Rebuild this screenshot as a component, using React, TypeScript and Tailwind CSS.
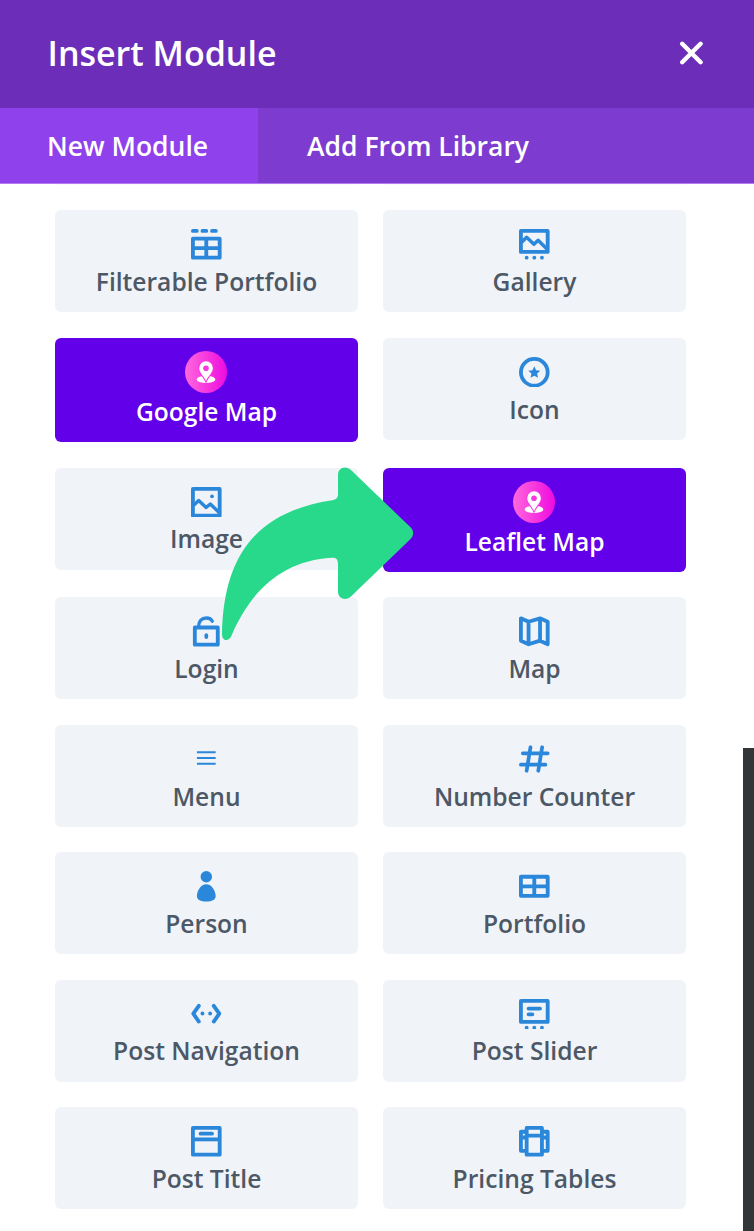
import type { ReactNode } from "react"

interface Module {
  name: string
  icon?: ReactNode
  featured?: boolean
}

const FONT = "font-['Open_Sans','Noto_Sans',sans-serif]"

const modules: Module[] = [
  {
    name: "Filterable Portfolio",
    icon: (
      <>
        <path d="M1 1h2M6 1h2M11 1h2" strokeLinecap="round" />
        <rect x="1" y="5" width="14" height="10" />
        <path d="M8 5v10M1 10h14" />
      </>
    ),
  },
  {
    name: "Gallery",
    icon: (
      <>
        <rect x="1" y="1" width="14" height="11" />
        <path d="M1.4 6.9L4 4.3 7.8 8 10 5.9l4.6 4.6" strokeWidth="1.8" />
        <Dots y={15} />
      </>
    ),
  },
  { name: "Google Map", featured: true },
  {
    name: "Icon",
    icon: (
      <>
        <circle cx="8" cy="8" r="7" />
        <path
          d="M8 4.8l.95 2.1 2.2.25-1.65 1.5.45 2.25L8 9.8l-1.95 1.1.45-2.25-1.65-1.5 2.2-.25z"
          fill="currentColor"
          stroke="none"
        />
      </>
    ),
  },
  {
    name: "Image",
    icon: (
      <>
        <rect x="1" y="1" width="14" height="14" />
        <path d="M1.4 9.6L4 7.1l3.9 3.6 2.2-1.8 4.6 4.4" strokeWidth="1.8" />
        <circle cx="11" cy="4.9" r="1" fill="currentColor" stroke="none" />
      </>
    ),
  },
  { name: "Leaflet Map", featured: true },
  {
    name: "Login",
    icon: (
      <>
        <rect x="2" y="6" width="12" height="9" />
        <path d="M4 5.5C4 2.6 5.7 1 8 1c1.5 0 2.6.6 3.1 1.7" strokeWidth="1.8" strokeLinecap="round" />
        <ellipse cx="8" cy="10.5" rx="1" ry="1.5" fill="currentColor" stroke="none" />
      </>
    ),
  },
  {
    name: "Map",
    icon: <path d="M1 1.2L5 3l6-1.8L15 3v11.8l-4-1.9-6 1.9-4-1.9zM5 3v11.8M11 1.2v11.7" strokeWidth="2" />,
  },
  {
    name: "Menu",
    icon: <path d="M3.1 4.3h9.8M3.1 7.3h9.8M3.1 10.3h9.8" strokeWidth="1" />,
  },
  {
    name: "Number Counter",
    icon: (
      <path
        d="M6 1.7L4 14M12.1 1.7l-2 12.3M2 4.85h13M1 10.8h12.8"
        strokeWidth="1.95"
        strokeLinecap="round"
      />
    ),
  },
  {
    name: "Person",
    icon: (
      <g fill="currentColor" stroke="none">
        <circle cx="8" cy="3" r="3" />
        <path d="M8 6.9c-2.8 0-4.9 3.4-4.9 6.3 0 1.9 2 2.8 4.9 2.8s4.9-.9 4.9-2.8c0-2.9-2.1-6.3-4.9-6.3z" />
      </g>
    ),
  },
  {
    name: "Portfolio",
    icon: (
      <>
        <rect x="1" y="3" width="14" height="10" />
        <path d="M8 3v10M1 8h14" />
      </>
    ),
  },
  {
    name: "Post Navigation",
    icon: (
      <>
        <path d="M4.1 3.6L1.2 7.7l2.9 4.1M11.9 3.6l2.9 4.1-2.9 4.1" strokeLinecap="round" />
        <circle cx="6" cy="7.6" r="1" fill="currentColor" stroke="none" />
        <circle cx="10" cy="7.6" r="1" fill="currentColor" stroke="none" />
      </>
    ),
  },
  {
    name: "Post Slider",
    icon: (
      <>
        <rect x="1" y="1" width="14" height="11" />
        <path d="M5 5h6M5 8h2" strokeLinecap="round" />
        <Dots y={15} />
      </>
    ),
  },
  {
    name: "Post Title",
    icon: (
      <>
        <rect x="1" y="1" width="14" height="14" />
        <path d="M1 7h14" />
        <path d="M5 4h6" strokeLinecap="round" />
      </>
    ),
  },
  {
    name: "Pricing Tables",
    icon: (
      <>
        <rect x="4" y="1" width="8" height="14" />
        <path d="M4 5h8M4 3H1v10h3M1 6h3M12 3h3v10h-3M15 6h-3" />
      </>
    ),
  },
]

function Dots({ y }: { y: number }) {
  return (
    <g fill="currentColor" stroke="none">
      <circle cx="4" cy={y} r="1" />
      <circle cx="8" cy={y} r="1" />
      <circle cx="12" cy={y} r="1" />
    </g>
  )
}

function PinBadge({ id }: { id: string }) {
  return (
    <svg viewBox="0 0 42 42" className="mr-px h-[42px] w-[42px]">
      <defs>
        <linearGradient id={id}>
          <stop offset="0" stopColor="#ff68dc" />
          <stop offset="1" stopColor="#ee0be0" />
        </linearGradient>
      </defs>
      <circle cx="21" cy="21" r="21" fill={`url(#${id})`} />
      <ellipse cx="21" cy="28.4" rx="9.3" ry="3.7" fill="#fff" />
      <path
        d="M21 10.3a6.8 6.8 0 0 0-6.8 6.8c0 4.6 4.4 7.7 6.8 12.9 2.4-5.2 6.8-8.3 6.8-12.9a6.8 6.8 0 0 0-6.8-6.8z"
        fill="#fff"
        stroke="#f83ade"
        strokeWidth="2"
        paintOrder="stroke"
      />
      <circle cx="21" cy="17.3" r="2.8" fill="#f83ade" />
    </svg>
  )
}

function ModuleCard({ name, icon, featured }: Module) {
  if (featured) {
    return (
      <button className="flex h-[104.4px] flex-col items-center rounded-[6px] bg-[#6200ea] pt-[13px] text-white">
        <PinBadge id={name.replace(" ", "-")} />
        <span className="mt-[2px] text-[24.6px] leading-[34px] font-semibold">{name}</span>
      </button>
    )
  }
  return (
    <button className="flex h-[102px] flex-col items-center rounded-[6px] bg-[#f0f3f8] pt-[19px] text-[#4c5866]">
      <svg
        viewBox="0 0 16 16"
        className="h-[30.6px] w-[30.6px] text-[#2b87da]"
        fill="none"
        stroke="currentColor"
        strokeWidth="2"
        strokeLinejoin="round"
      >
        {icon}
      </svg>
      <span className="mt-[5.2px] text-[24.6px] leading-[34px] font-semibold">{name}</span>
    </button>
  )
}

export default function App() {
  return (
    <div className={`relative flex h-[1231px] w-[754px] flex-col overflow-hidden bg-white ${FONT}`}>
      <header className="flex h-[108px] shrink-0 items-center justify-between bg-[#6c2eb9] pr-[51px] pb-[2px] pl-[47.5px] text-white">
        <h1 className="text-[34px] leading-none font-semibold">Insert Module</h1>
        <button aria-label="Close">
          <svg viewBox="0 0 24 24" className="h-6 w-6" stroke="currentColor" strokeWidth="4.4" strokeLinecap="round">
            <path d="M3.2 2.8l18.4 18.4M21.6 2.8L3.2 21.2" />
          </svg>
        </button>
      </header>

      <nav className="flex h-[76px] shrink-0 border-b border-[#b47cf2] bg-[#7e3bd0] text-[26.5px] font-semibold text-white">
        <button className="w-[258px] bg-[#8f42ec] pt-[3px] pl-[47px] text-left">New Module</button>
        <button className="pt-[3px] pl-[49px] text-left">Add From Library</button>
      </nav>

      <main className="flex min-h-0 flex-1 justify-between pl-[55px]">
        <div className="grid grid-cols-[303px_303px] content-start items-start gap-x-[25px] gap-y-[25.4px]">
          {/* bottom edge of the row that is scrolled out of view */}
          <div className="h-px bg-[#f9fafc]" />
          <div className="h-px bg-[#f9fafc]" />
          {modules.map((m) => (
            <ModuleCard key={m.name} {...m} />
          ))}
        </div>
        <div className="mt-[564px] w-[11.4px] bg-[#333638]" />
      </main>

      {/* Arrow pointing at Leaflet Map */}
      <svg viewBox="222 467 192 174" className="absolute top-[467px] left-[222px] h-[174px] w-[192px]">
        <path
          d="M222 634C223.500 556 256 512 332 500.300C336 499.500 338 498 338 494V475C338 467.500 346 465 351.500 470.500L410.500 527.300C414 530.800 414 535.500 410.500 539L351.500 596C346 601.500 338 599 338 591.500V565C338 560 337 557.500 332 557.700C283 560.500 251 590 231.500 635.500C229.500 641.500 222 642 222 634Z"
          fill="#29d98b"
        />
      </svg>
    </div>
  )
}
